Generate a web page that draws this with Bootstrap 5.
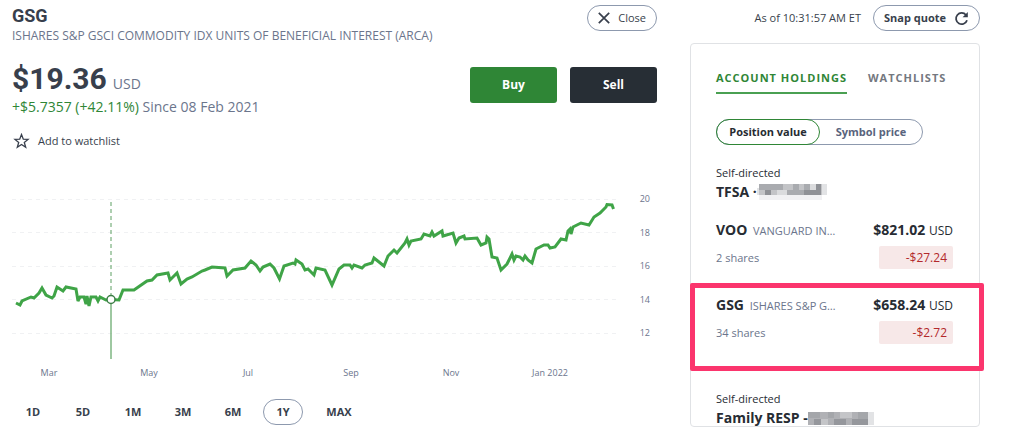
<!DOCTYPE html>
<html lang="en">
<head>
<meta charset="utf-8">
<meta name="viewport" content="width=device-width, initial-scale=1">
<title>GSG quote</title>
<link href="https://cdn.jsdelivr.net/npm/bootstrap@5.3.0/dist/css/bootstrap.min.css" rel="stylesheet">
<style>
  :root { --ink: #383f4c; --slate: #6b758c; --green: #2f8636; --line: #8d99ae; }
  body { font-family: "Open Sans", "Noto Sans", sans-serif; font-size: 11px; line-height: 16px; color: var(--ink); background: #fff; overflow: hidden; }
  a { color: inherit; text-decoration: none; }
  .page { padding: 5px 44px 0 12px; gap: 33px; }
  .main-col { min-width: 0; }
  .side-col { width: 290px; }
  .slab { font-family: "Roboto Slab", Roboto, sans-serif; font-weight: 700; }
  .symbol { font-size: 18px; line-height: 22px; }
  .slate { color: var(--slate); }
  .company { font-size: 12px; line-height: 18px; }
  .quote { gap: 6px; }
  .price { font-size: 30px; line-height: 36px; }
  .unit { font-size: 14px; }
  .change { font-size: 14px; line-height: 20px; }
  .gain { color: var(--green); }
  .pill { border: 1px solid var(--line); border-radius: 13px; background: #fff; color: var(--ink); height: 26px; padding: 0 10px; font-size: 11px; line-height: 16px; }
  .trade { width: 87px; height: 36px; padding: 0; font-size: 12px; font-weight: 700; color: #fff; border: 0; border-radius: 3px; }
  .trade:hover { color: #fff; }
  .buy, .buy:hover { background: var(--green); }
  .sell, .sell:hover { background: #272e35; }
  .trades { gap: 13px; margin-top: 6px; }
  .watch { font-size: 11px; margin-top: 16px; }
  .chart { margin-top: 41px; }
  .chart text { font-size: 9px; fill: var(--slate); }
  .ranges { margin: 19px 0 0 1px; gap: 10px; }
  .range { width: 40px; height: 26px; padding: 0; border: 1px solid transparent; border-radius: 13px; font-size: 11px; font-weight: 700; line-height: 16px; color: var(--ink); }
  .range.active { border-color: var(--line); color: var(--ink); }
  .range.wide { width: 52px; }
  .panel { margin-top: 12px; height: 384px; border: 1px solid #e0e2e5; border-radius: 4px; padding: 25px 26px 0 25px; color: #272c33; }
  .tabs { gap: 21px; }
  .tab { font-size: 11px; font-weight: 700; letter-spacing: 1px; line-height: 18px; padding: 0 0 5px; border: 0; border-bottom: 2px solid transparent; background: none; color: #74787f; }
  .tab.active { color: var(--green); border-color: #4aa052; }
  .switch { margin-top: 25px; border: 1px solid var(--line); border-radius: 13px; height: 26px; width: 207px; }
  .switch button { font-size: 11px; font-weight: 700; line-height: 16px; background: none; border: 0; padding: 0; color: #59647d; }
  .switch .active { width: 104px; margin: -1px 0 -1px -1px; border: 1px solid var(--green); border-radius: 13px; color: #272c33; }
  .account { font-size: 14px; line-height: 22px; font-weight: 700; }
  .ticker { font-size: 14px; line-height: 18px; }
  .ticker small { font-size: 11px; margin-left: 2px; }
  .value { font-size: 14px; line-height: 18px; }
  .value span { font-size: 12px; }
  .result { margin-top: 6px; }
  .delta { width: 74px; height: 23px; padding-right: 6px; background: #f7e8e8; color: #b3292b; border-radius: 2px; font-size: 12px; line-height: 23px; text-align: right; }
  .holding { margin-top: 18px; }
  .holding + .holding { margin-top: 27px; }
  .next-account { margin-top: 47px; }
  .callout { position: absolute; left: -26px; right: -31px; top: -13px; height: 88px; border: 5px solid #fb356d; border-radius: 2px; pointer-events: none; }
</style>
</head>
<body>
<div class="page d-flex flex-column flex-md-row">
  <main class="main-col flex-grow-1">
    <div class="d-flex justify-content-between align-items-start">
      <header>
        <h1 class="slab symbol m-0">GSG</h1>
        <p class="company slate m-0">ISHARES S&amp;P GSCI COMMODITY IDX UNITS OF BENEFICIAL INTEREST (ARCA)</p>
      </header>
      <button type="button" class="pill d-flex align-items-center gap-2">
        <svg width="12" height="12" viewBox="0 0 12 12" stroke="currentColor" stroke-width="1.7" aria-hidden="true"><path d="M.8 .8 11.2 11.2M11.2 .8 .8 11.2"/></svg>Close
      </button>
    </div>
    <div class="d-flex justify-content-between align-items-start mt-3">
      <div>
        <div class="quote d-flex align-items-baseline"><span class="slab price">$19.36</span><span class="unit slate">USD</span></div>
        <div class="change slate"><span class="gain">+$5.7357 (+42.11%)</span> Since 08 Feb 2021</div>
      </div>
      <div class="trades d-flex">
        <button type="button" class="btn trade buy">Buy</button>
        <button type="button" class="btn trade sell">Sell</button>
      </div>
    </div>
    <a href="#" class="watch d-flex align-items-center gap-2">
      <svg width="18" height="16" viewBox="0 0 18 16" fill="none" stroke="currentColor" stroke-width="1.3" aria-hidden="true"><path d="M9.500 1.500 11.300 6.200 16 6.400 12.300 9.400 13.700 14.300 9.500 11.500 5.300 14.300 6.700 9.400 3 6.400 7.700 6.200Z"/></svg>Add to watchlist
    </a>
    <svg class="chart d-block w-100" viewBox="12 190 645 190" role="img" aria-label="GSG price over one year">
      <g stroke="#f0f1f3" stroke-dasharray="4 4"><path d="M12 199.500H619M12 232.500H619M12 266.500H619M12 299.500H619M12 333.500H619"/></g>
      <path d="M111 202V296" stroke="#5d9f62" stroke-dasharray="4 3"/>
      <path d="M111 303V359" stroke="#6aab6f" stroke-width="1.300"/>
      <path fill="none" stroke="#3fa447" stroke-width="3" stroke-linejoin="miter" stroke-miterlimit="3" d="M16 303 20 305 22 301 31 297 34 298 39 293 42 288 46 295 52 298 54 296 57 287 63 291 66 287 76 289 78 301 80 297 84 297 86 304 87 296 89 306 91 297 96 297 98 301 100 297 106 300 111 299.500 119 300 123 290 134 290 147 281 152 280 157 275 168 273 170 280 177 273 181 284 187 279 192 277 202 271 205 270 212 267 225 268 227 276 233 270 245 268 251 261 256 265 260 271 263 267 270 264 274 268 279.500 279 284 266 293 263 295 264 296 260 302 264 305 270 308 269 314 275 316 268 325 270 332 285 339 269 344 265 350 265 352 268 354 265 362 268 365 265 372 263 374 258 384 266 388 256 394 250 397 253 405 243 407 239 409 245 411 241 421 239 424 234 430 236 432 232 434 236 442 231 443 236 453 233 456 243 459 238 464 236 465 239 477 238 481 245 486 243 487 237 489 239 492 257 497 258 501 270 507 264 512 254 514 260 516 256 520 257 523 260 525 256 528 260 532 263 536 249 544 245 548 245 550 248 555 247 561 239 566 240 568 231 570 229 571 234 573 227 581 223 589 225 594 217 600 213 606 207 607 204.500 612 205 613.500 209"/>
      <circle cx="111" cy="299.500" r="4" fill="#fff" stroke="#3b7d45" stroke-width="1.500"/>
      <g text-anchor="end"><text x="650" y="202">20</text><text x="650" y="236">18</text><text x="650" y="269">16</text><text x="650" y="303">14</text><text x="650" y="336">12</text></g>
      <g text-anchor="middle"><text x="49" y="376">Mar</text><text x="149" y="376">May</text><text x="248" y="376">Jul</text><text x="351" y="376">Sep</text><text x="451" y="376">Nov</text><text x="550" y="376">Jan 2022</text></g>
    </svg>
    <div class="ranges d-flex" role="group" aria-label="Chart range">
      <button type="button" class="btn range">1D</button>
      <button type="button" class="btn range">5D</button>
      <button type="button" class="btn range">1M</button>
      <button type="button" class="btn range">3M</button>
      <button type="button" class="btn range">6M</button>
      <button type="button" class="btn range active">1Y</button>
      <button type="button" class="btn range wide">MAX</button>
    </div>
  </main>

  <aside class="side-col flex-shrink-0">
    <div class="d-flex justify-content-end align-items-center">
      <span class="me-2 pe-1">As of 10:31:57 AM ET</span>
      <button type="button" class="pill d-flex align-items-center gap-2 fw-bold">Snap quote
        <svg width="15" height="15" viewBox="0 0 15 15" fill="none" stroke="currentColor" stroke-width="1.800" aria-hidden="true"><path d="M12 4A5.600 5.600 0 1 0 13 9.200"/><path d="M13.800 1V6.200H8.600Z" fill="currentColor" stroke="none"/></svg>
      </button>
    </div>
    <section class="panel">
      <div class="tabs d-flex" role="tablist">
        <button type="button" role="tab" aria-selected="true" class="tab active">ACCOUNT HOLDINGS</button>
        <button type="button" role="tab" aria-selected="false" class="tab">WATCHLISTS</button>
      </div>
      <div class="switch d-flex" role="group" aria-label="Displayed value">
        <button type="button" class="active">Position value</button>
        <button type="button" class="flex-grow-1">Symbol price</button>
      </div>
      <div class="mt-3 pt-1">Self-directed</div>
      <div class="account d-flex align-items-center">TFSA ·
        <svg width="70" height="16" shape-rendering="crispEdges" aria-hidden="true">
          <path fill="#c3c4c7" d="M2 0H65V11H2Z"/><path fill="#e2e3e5" d="M65 0H70V11H65ZM0 4H2V11H0Z"/><path fill="#f1f1f3" d="M2 11H65V16H2Z"/>
          <path fill="#8f9196" d="M8 6H14V11H8ZM47 6H64V11H47ZM59 0H64V6H59Z"/><path fill="#a9abaf" d="M2 0H26V6H2ZM36 0H42V11H36ZM30 6H47V11H30ZM47 0H53V6H47Z"/><path fill="#dadbdd" d="M20 6H30V11H20ZM53 0H59V6H53Z"/>
        </svg>
      </div>
      <div class="holding">
        <div class="d-flex justify-content-between"><div class="ticker"><b>VOO</b> <small class="slate">VANGUARD IN…</small></div><div class="value"><b>$821.02</b> <span>USD</span></div></div>
        <div class="result d-flex justify-content-between align-items-center"><span class="slate">2 shares</span><span class="delta">-$27.24</span></div>
      </div>
      <div class="holding position-relative">
        <div class="d-flex justify-content-between"><div class="ticker"><b>GSG</b> <small class="slate">ISHARES S&amp;P G…</small></div><div class="value"><b>$658.24</b> <span>USD</span></div></div>
        <div class="result d-flex justify-content-between align-items-center"><span class="slate">34 shares</span><span class="delta">-$2.72</span></div>
        <div class="callout"></div>
      </div>
      <div class="next-account">Self-directed</div>
      <div class="account d-flex align-items-center">Family RESP -
        <svg width="66" height="13" shape-rendering="crispEdges" aria-hidden="true">
          <path fill="#b0b1b5" d="M0 0H60V13H0Z"/><path fill="#e2e3e5" d="M60 0H66V13H60Z"/>
          <path fill="#95979c" d="M6 7H13V13H6ZM26 7H38V13H26ZM44 7H60V13H44Z"/><path fill="#a4a6aa" d="M0 0H12V6H0ZM20 0H26V6H20ZM50 0H60V7H50Z"/><path fill="#c4c5c8" d="M13 7H20V13H13ZM32 0H44V6H32Z"/>
        </svg>
      </div>
    </section>
  </aside>
</div>
<script src="https://cdn.jsdelivr.net/npm/bootstrap@5.3.0/dist/js/bootstrap.bundle.min.js"></script>
</body>
</html>
